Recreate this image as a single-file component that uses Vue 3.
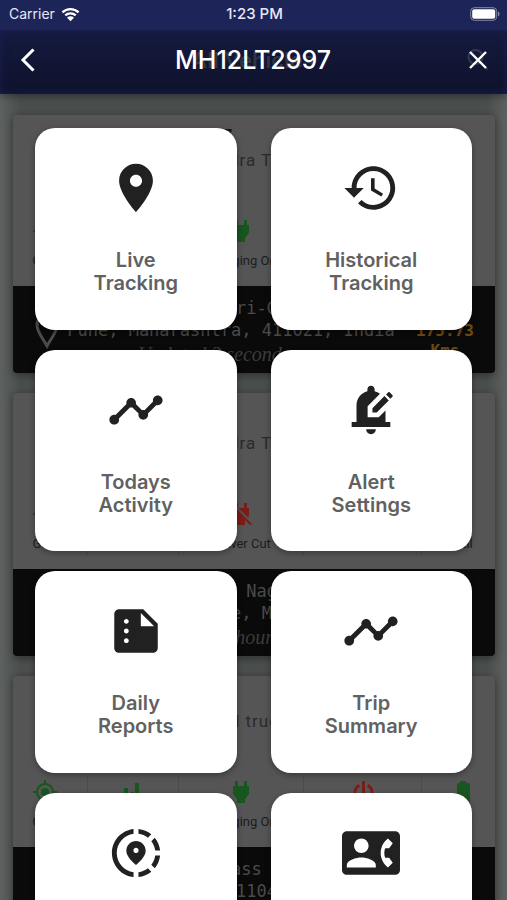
<script setup>
const timeline =
  'M23 8c0 1.1-.9 2-2 2-.18 0-.35-.02-.51-.07l-3.56 3.55c.05.16.07.34.07.52 0 1.1-.9 2-2 2s-2-.9-2-2c0-.18.02-.36.07-.52l-2.55-2.55c-.16.05-.34.07-.52.07s-.36-.02-.52-.07l-4.55 4.56c.05.16.07.33.07.51 0 1.1-.9 2-2 2s-2-.9-2-2 .9-2 2-2c.18 0 .35.02.51.07l4.56-4.55C8.02 9.36 8 9.18 8 9c0-1.1.9-2 2-2s2 .9 2 2c0 .18-.02.36-.07.52l2.55 2.55c.16-.05.34-.07.52-.07s.36.02.52.07l3.55-3.56C19.02 8.35 19 8.18 19 8c0-1.1.9-2 2-2s2 .9 2 2z'

const tiles = [
  {
    label: ['Live', 'Tracking'],
    icon: 'M12 2C8.13 2 5 5.13 5 9c0 5.25 7 13 7 13s7-7.75 7-13c0-3.87-3.13-7-7-7zm0 9.5c-1.38 0-2.5-1.12-2.5-2.5s1.12-2.5 2.5-2.5 2.5 1.12 2.5 2.5-1.12 2.5-2.5 2.5z',
  },
  {
    label: ['Historical', 'Tracking'],
    icon: 'M13 3c-4.97 0-9 4.03-9 9H1l3.89 3.89.07.14L9 12H6c0-3.87 3.13-7 7-7s7 3.13 7 7-3.13 7-7 7c-1.93 0-3.68-.79-4.94-2.06l-1.42 1.42C8.27 19.99 10.51 21 13 21c4.97 0 9-4.03 9-9s-4.03-9-9-9zm-1 5v5l4.28 2.54.72-1.21-3.5-2.08V8H12z',
  },
  { label: ['Todays', 'Activity'], icon: timeline },
  {
    label: ['Alert', 'Settings'],
    icon: 'M17.58 6.25l1.77 1.77L14.37 13H12.6v-1.77l4.98-4.98zm3.27-.44l-1.06-1.06c-.2-.2-.51-.2-.71 0l-.85.85L20 7.37l.85-.85c.2-.2.2-.51 0-.71zM18 12.2V17h2v2H4v-2h2v-7c0-2.79 1.91-5.14 4.5-5.8v-.7c0-.83.67-1.5 1.5-1.5s1.5.67 1.5 1.5v.7c.82.21 1.57.59 2.21 1.09L10.6 10.4V15h4.6l2.8-2.8zM10 20h4c0 1.1-.9 2-2 2s-2-.9-2-2z',
  },
  {
    label: ['Daily', 'Reports'],
    icon: 'M15 3H5c-1.1 0-1.99.9-1.99 2L3 19c0 1.1.89 2 1.99 2H19c1.1 0 2-.9 2-2V9l-6-6zM8 17c-.55 0-1-.45-1-1s.45-1 1-1 1 .45 1 1-.45 1-1 1zm0-4c-.55 0-1-.45-1-1s.45-1 1-1 1 .45 1 1-.45 1-1 1zm0-4c-.55 0-1-.45-1-1s.45-1 1-1 1 .45 1 1-.45 1-1 1zm6 1V4.5l5.5 5.5H14z',
  },
  { label: ['Trip', 'Summary'], icon: timeline },
  {
    label: [],
    name: 'Location',
    icon: 'M13.02 19.93v2.02c2.01-.2 3.84-1 5.32-2.21l-1.42-1.43c-1.11.86-2.44 1.44-3.9 1.62zM4.03 12c0-4.05 3.03-7.41 6.95-7.93V2.05C5.95 2.58 2.03 6.84 2.03 12s3.92 9.42 8.95 9.95v-2.02c-3.92-.52-6.95-3.88-6.95-7.93zm15.92-1h2.02c-.2-2.01-1-3.84-2.21-5.32l-1.43 1.43c.86 1.1 1.44 2.43 1.62 3.89zm-1.61-6.74c-1.48-1.21-3.32-2.01-5.32-2.21v2.02c1.46.18 2.79.76 3.9 1.62l1.42-1.43zm-.01 12.64l1.43 1.42c1.21-1.48 2.01-3.31 2.21-5.32h-2.02c-.18 1.46-.76 2.79-1.62 3.9zM16 11.1C16 8.61 14.1 7 12 7s-4 1.61-4 4.1c0 1.66 1.33 3.63 4 5.9 2.67-2.27 4-4.24 4-5.9zm-4 .9c-.59 0-1.07-.48-1.07-1.07 0-.59.48-1.07 1.07-1.07s1.07.48 1.07 1.07c0 .59-.48 1.07-1.07 1.07z',
  },
  {
    label: [],
    name: 'Contact',
    icon: 'M22 3H2C.9 3 0 3.9 0 5v14c0 1.1.9 2 2 2h20c1.1 0 1.99-.9 1.99-2L24 5c0-1.1-.9-2-2-2zM8 6c1.66 0 3 1.34 3 3s-1.34 3-3 3-3-1.34-3-3 1.34-3 3-3zm6 12H2v-1c0-2 4-3.1 6-3.1s6 1.1 6 3.1v1zm3.85-4h1.64L21 16l-1.99 1.99c-1.31-.98-2.28-2.38-2.73-3.99-.18-.64-.28-1.31-.28-2s.1-1.36.28-2c.45-1.62 1.42-3.01 2.73-3.99L21 8l-1.51 2h-1.64c-.22.63-.35 1.3-.35 2s.13 1.37.35 2z',
  },
]

const vehicles = [
  {
    plate: 'MH12LT2997', model: 'Bolero Mahindra Truck', power: 'Charging On', plugged: true,
    lines: ['Plot 2, Bhosari-Gaon Road', 'Pune, Maharashtra, 411021, India'],
    updated: 'Updated 3 seconds ago', distance: '175.73',
  },
  {
    plate: 'MH12LT29', model: 'Bolero Mahindra Truck', power: 'Power Cut', plugged: false, tall: true,
    lines: ['Shankar Marg, Nagpur City', 'Butibori Square, Maharashtra'],
    updated: 'Updated 3 hours ago',
  },
  {
    plate: 'DL01GC299S', model: 'Ashok Leyland truck', power: 'Charging On', plugged: true,
    lines: ['Delhi Road Bypass Toll Plaza', 'Bawana, Delhi 110432, India'],
    updated: 'Updated 3 hours ago',
  },
]
</script>

<template>
  <div class="screen">
    <header class="top">
      <div class="status">
        <span class="carrier">
          Carrier
          <svg class="wifi" viewBox="0 0 20 15" aria-hidden="true">
            <path d="M1.5 5.2a12.3 12.3 0 0 1 17 0M4.5 8.5a8 8 0 0 1 11 0" />
            <path class="solid" d="M10 14.5 6.4 10.9a5.1 5.1 0 0 1 7.2 0z" />
          </svg>
        </span>
        <span class="clock">1:23 PM</span>
        <svg class="battery" viewBox="0 0 30 14" aria-hidden="true">
          <rect class="shell" x=".7" y=".7" width="26" height="12.6" rx="3.6" />
          <rect class="charge" x="2.2" y="2.2" width="23" height="9.6" rx="2" />
          <path class="nub" d="M28 4.6c2 .6 2 4.2 0 4.8z" />
        </svg>
      </div>
      <div class="bar">
        <button class="nav" type="button" aria-label="Back">
          <svg viewBox="0 0 24 24"><path d="M17.5 1.5 7 12l10.5 10.5" /></svg>
        </button>
        <div class="titles">
          <span class="under">All Vehicles</span>
          <h1>MH12LT2997</h1>
        </div>
        <button class="nav close" type="button" aria-label="Close">
          <svg viewBox="0 0 24 24">
            <g class="lens"><circle cx="9.5" cy="9" r="7" /><path d="m15 15 6.5 6.5" /></g>
            <path d="M4 4l16 16M20 4 4 20" />
          </svg>
        </button>
      </div>
    </header>

    <section class="fleet" aria-hidden="true">
      <article v-for="v in vehicles" :key="v.plate" class="vehicle" :class="{ tall: v.tall }">
        <div class="summary">
          <svg class="lorry" viewBox="0 0 48 24"><path d="M0 6h30v12H0zM31 9h9l6 5v4H31z" /></svg>
          <div class="names">
            <p class="plate">{{ v.plate }}</p>
            <p class="model">{{ v.model }}</p>
          </div>
        </div>
        <ul class="states">
          <li>
            <svg class="good" viewBox="0 0 24 24"><path fill-rule="evenodd" d="M12 8a4 4 0 1 0 0 8 4 4 0 0 0 0-8zm9 3A9 9 0 0 0 13 3V0h-2v3A9 9 0 0 0 3 11H0v2h3a9 9 0 0 0 8 8v3h2v-3a9 9 0 0 0 8-8h3v-2zm-9 8a7 7 0 1 1 0-14 7 7 0 0 1 0 14z" /></svg>
            <span>GPS</span>
          </li>
          <li>
            <svg class="good" viewBox="0 0 24 24"><path d="M3 8h4v14H3zM10 12h3v10h-3zM14 3h4v19h-4z" /></svg>
            <span>GSM</span>
          </li>
          <li>
            <svg v-if="v.plugged" class="good" viewBox="0 0 24 24"><path d="M6 1h3v5h6V1h3v5h2v8l-4 5v4H8v-4l-4-5V6h2z" /></svg>
            <svg v-else class="bad" viewBox="0 0 24 24"><path d="M6 1h3v5h6V1h3v5h2v8l-1 1.5L7 4zM4 6l12 12v5H8v-4l-4-5zM1 3l2-1 20 20-2 1z" /></svg>
            <span>{{ v.power }}</span>
          </li>
          <li>
            <svg class="bad" viewBox="0 0 24 24"><path d="M11 1h3v12h-3zM17.5 4a10 10 0 1 1-10 0L9 6.5a7.2 7.2 0 1 0 7 0z" /></svg>
            <span>Ignition</span>
          </li>
          <li>
            <svg class="good" viewBox="0 0 24 24"><path d="M9 1h6v2h2q2 0 2 2v18H6V5q0-2 2-2h1z" /></svg>
            <span>Full</span>
          </li>
        </ul>
        <div class="place">
          <svg class="pin" viewBox="0 0 24 36"><path d="M12 33C7 24 2 19 2 12a10 10 0 0 1 20 0c0 7-5 12-10 21z" /></svg>
          <div class="address">
            <p v-for="line in v.lines" :key="line">{{ line }}</p>
            <p class="updated">{{ v.updated }}</p>
          </div>
          <p v-if="v.distance" class="distance">{{ v.distance }}<br />Kms</p>
        </div>
      </article>
    </section>

    <nav class="menu">
      <button
        v-for="(tile, i) in tiles"
        :key="i"
        class="tile"
        type="button"
        :aria-label="tile.name"
      >
        <svg viewBox="0 0 24 24" aria-hidden="true"><path :d="tile.icon" /></svg>
        <span v-if="tile.label.length" class="label">{{ tile.label[0] }}<br />{{ tile.label[1] }}</span>
      </button>
    </nav>
  </div>
</template>

<style>
body {
  background: #565a58;
}
</style>

<style scoped>
.screen {
  display: grid;
  grid-template-columns: minmax(0, 1fr);
  grid-template-rows: auto minmax(0, 1fr);
  height: 100vh;
  overflow: hidden;
  background: #5a5e5c;
  font-family: Inter, "Liberation Sans", sans-serif;
}
p, h1, ul {
  margin: 0;
  padding: 0;
}
button {
  border: 0;
  padding: 0;
  font: inherit;
  cursor: pointer;
}

/* Header */
.top {
  grid-area: 1 / 1;
  z-index: 1;
  color: #fff;
  background: #1d2458;
  box-shadow: 0 2px 8px rgba(0, 0, 0, 0.4);
}
.status {
  display: grid;
  grid-template-columns: 1fr auto 1fr;
  align-items: center;
  height: 28px;
  padding: 0 7px 2px 9px;
  font-size: 14px;
  line-height: 28px;
  color: #e6e8f2;
}
.carrier {
  display: flex;
  align-items: center;
  gap: 6px;
}
.wifi {
  width: 19px;
  height: 15px;
  fill: none;
  stroke: #fff;
  stroke-width: 2.4;
}
.wifi .solid {
  fill: #fff;
  stroke: none;
}
.clock {
  font-size: 15px;
  font-weight: 500;
}
.battery {
  justify-self: end;
  width: 30px;
  height: 14px;
}
.shell {
  fill: none;
  stroke: #8589a8;
}
.charge {
  fill: #fff;
}
.nub {
  fill: #8589a8;
}
.bar {
  display: grid;
  grid-template-columns: 32px 1fr 32px;
  align-items: center;
  height: 64px;
  padding: 0 13px 4px 12px;
  box-sizing: border-box;
  background: linear-gradient(#151a40, #0e122b);
  box-shadow: inset 0 0 8px #1a2052;
}
.nav {
  display: grid;
  place-items: center;
  height: 32px;
  background: none;
}
.nav svg {
  width: 24px;
  height: 24px;
  fill: none;
  stroke: #fff;
  stroke-width: 3;
  overflow: visible;
}
.close svg {
  stroke-width: 2.4;
}
.nav .lens {
  stroke: #33374a;
  stroke-width: 2;
}
.titles {
  display: grid;
  place-items: center;
}
.titles > * {
  grid-area: 1 / 1;
}
.under {
  color: #30343f;
  font-size: 22px;
  font-weight: 600;
}
h1 {
  z-index: 1;
  font-size: 25px;
  line-height: 30px;
  font-weight: 500;
}

/* Dimmed vehicle list behind the menu */
.fleet {
  grid-area: 2 / 1;
  display: flex;
  flex-direction: column;
  gap: 20px;
  padding: 21px 12px 0 13px;
  background: linear-gradient(90deg, #5d615f, #4a4e4c 4%, #4a4e4c 96%, #5d615f);
  font-family: Roboto, "Liberation Sans", sans-serif;
}
.vehicle {
  flex: none;
  border-radius: 4px;
  overflow: hidden;
  background: #555;
  box-shadow: 0 2px 8px rgba(0, 0, 0, 0.4);
}
.summary {
  display: flex;
  gap: 34px;
  height: 90px;
  padding: 9px 22px 0;
}
.tall .summary {
  padding-top: 14px;
}
.lorry {
  width: 48px;
  height: 60px;
  margin-top: 4px;
  fill: #7c2723;
}
.plate {
  font-size: 19px;
  line-height: 24px;
  font-weight: 700;
  color: #151515;
}
.model {
  font-size: 17px;
  line-height: 24px;
  color: #2b2b2b;
  letter-spacing: 1px;
}
.states {
  display: grid;
  grid-template-columns: 74fr 91fr 125fr 118fr 74fr;
  height: 58px;
  padding-bottom: 14px;
  list-style: none;
}
.states li {
  display: flex;
  flex-direction: column;
  align-items: center;
  gap: 10px;
  padding-top: 5px;
  border-left: 1px solid #4b4b4b;
  font-size: 13px;
  line-height: 16px;
  color: #1c1c1c;
  white-space: nowrap;
}
.states li:first-child {
  border-left: 0;
  padding-right: 10px;
}
.states li:last-child {
  padding-left: 8px;
}
.states svg {
  width: 24px;
  height: 24px;
}
.good {
  fill: #17561f;
}
.bad {
  fill: #7a1d19;
}
.place {
  display: grid;
  grid-template-columns: 54px minmax(0, 1fr) 100px;
  min-height: 87px;
  background: #0a0a0a;
  color: #4b4b4b;
  font-family: "DejaVu Sans Mono", monospace;
  font-size: 17px;
  line-height: 22px;
}
.pin {
  width: 26px;
  height: 36px;
  margin: 27px 0 0 21px;
  fill: none;
  stroke: #4b4b4b;
  stroke-width: 3;
}
.address {
  padding-top: 11px;
  text-align: center;
  white-space: nowrap;
}
.updated {
  padding-top: 1px;
  font-family: "Liberation Serif", serif;
  font-size: 20px;
  line-height: 24px;
  font-style: italic;
  color: #3c3c3c;
}
.distance {
  padding-top: 35px;
  font-size: 16px;
  line-height: 20px;
  font-weight: 700;
  text-align: center;
  color: #6f4a14;
}

/* Action menu */
.menu {
  grid-area: 2 / 1;
  z-index: 1;
  display: grid;
  grid-template-columns: 1fr 1fr;
  align-content: start;
  gap: 20px 34px;
  padding: 34px 35px;
}
.tile {
  display: flex;
  flex-direction: column;
  align-items: center;
  gap: 32px;
  aspect-ratio: 1;
  padding-top: 31px;
  border-radius: 20px;
  background: #fff;
  box-shadow: 0 2px 6px rgba(0, 0, 0, 0.35);
}
.tile svg {
  flex: none;
  width: 58px;
  height: 58px;
  fill: #212121;
}
.label {
  font-size: 20px;
  line-height: 23px;
  font-weight: 600;
  color: #616161;
}
</style>
